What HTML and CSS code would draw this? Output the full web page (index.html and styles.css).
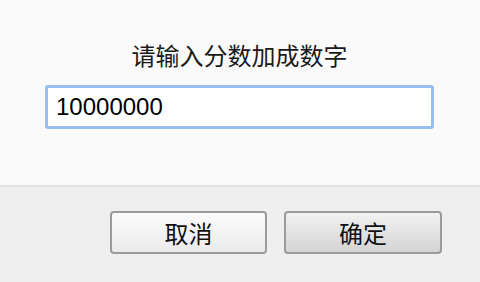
FILE: index.html
```html
<!DOCTYPE html>
<html lang="zh">
<head>
<meta charset="utf-8">
<link rel="stylesheet" href="styles.css">
</head>
<body>
<div class="dialog">
  <div class="content">
    <div class="title">请输入分数加成数字</div>
    <input class="field" type="text" value="10000000">
  </div>
  <div class="actions">
    <button class="btn btn-cancel">取消</button>
    <button class="btn btn-ok">确定</button>
  </div>
</div>
</body>
</html>
```
FILE: styles.css
```css
html, body {
  margin: 0;
  padding: 0;
  width: 480px;
  height: 282px;
  overflow: hidden;
  font-family: "Liberation Sans", "Noto Sans CJK SC", sans-serif;
}
.dialog {
  display: flex;
  flex-direction: column;
  height: 282px;
}
.content {
  height: 185px;
  box-sizing: border-box;
  background: #fafafa;
  padding: 43px 46px 0 45px;
  display: flex;
  flex-direction: column;
  align-items: stretch;
}
.title {
  text-align: center;
  font-size: 24px;
  line-height: 28px;
  color: #1a1a1a;
  margin-bottom: 14px;
}
.field {
  box-sizing: border-box;
  height: 44px;
  margin: 0;
  border: 3px solid #97c0f1;
  border-radius: 3px;
  background: #fff;
  padding: 0 0 0 8px;
  font-family: "Liberation Sans", sans-serif;
  font-size: 24px;
  color: #000;
  outline: none;
}
.actions {
  flex: 1;
  border-top: 2px solid #e2e2e2;
  background: #efefef;
  display: flex;
  justify-content: flex-end;
  align-items: flex-start;
  padding: 24px 38px 0 0;
  gap: 17px;
}
.btn {
  box-sizing: border-box;
  height: 43px;
  border: 2px solid #9b9b9b;
  border-radius: 4px;
  font-family: "Liberation Sans", "Noto Sans CJK SC", sans-serif;
  font-size: 24px;
  color: #111;
  padding: 0;
}
.btn-cancel {
  width: 157px;
  background: linear-gradient(#fbfbfb, #ebebeb);
}
.btn-ok {
  width: 158px;
  background: linear-gradient(#f2f2f2, #d4d4d4);
}
```
